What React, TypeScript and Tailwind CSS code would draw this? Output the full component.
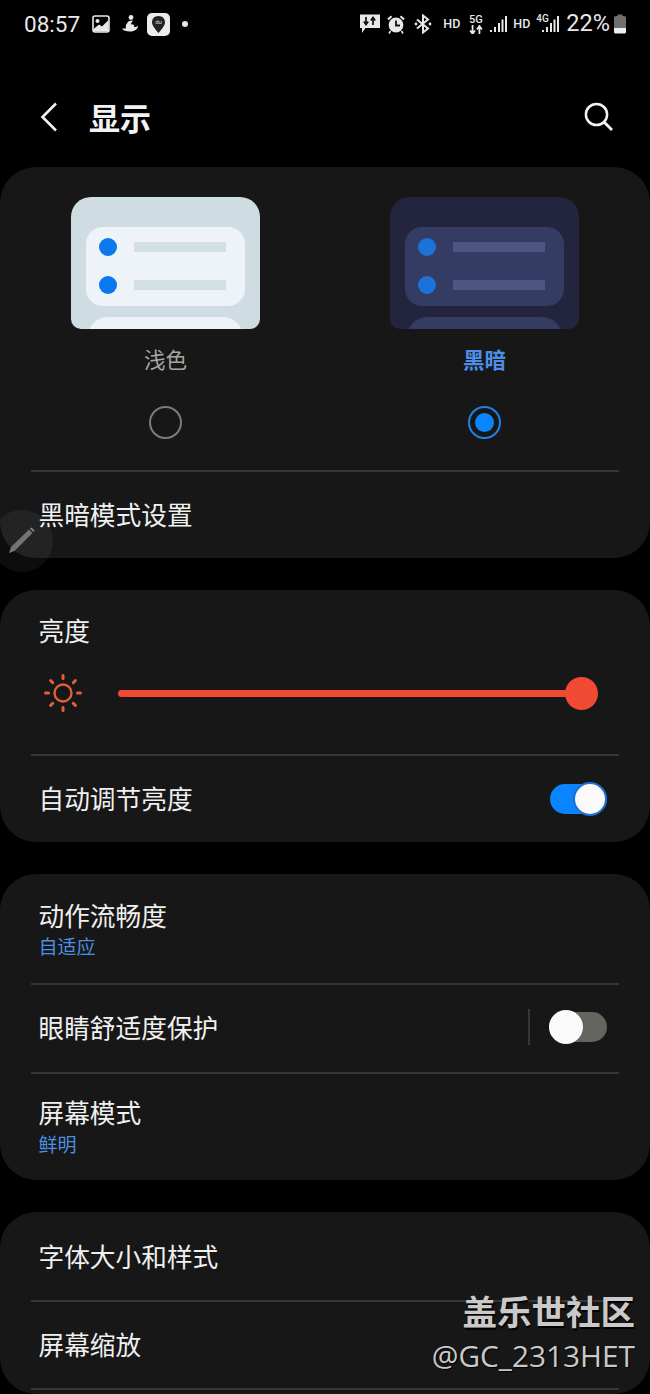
import React from "react";

const cjk = { fontFamily: '"Noto Sans CJK SC", sans-serif' };

function Preview({ dark }: { dark?: boolean }) {
  const bg = dark ? "bg-[#22253d]" : "bg-[#cfdde3]";
  const inner = dark ? "bg-[#343c63]" : "bg-[#eef3f9]";
  const bar = dark ? "bg-[#4c5680]" : "bg-[#d2dfe3]";
  const dot = dark ? "bg-[#1b72d8]" : "bg-[#0b78ee]";
  const Line = () => (
    <div className="flex items-center h-[38px] pl-[13px]">
      <div className={`w-[18px] h-[18px] rounded-full ${dot}`} />
      <div className={`ml-[17px] w-[92px] h-[10px] ${bar}`} />
    </div>
  );
  return (
    <div className={`w-[189px] h-[132px] rounded-t-[20px] rounded-b-[10px] overflow-hidden pt-[30px] px-[15px] ${bg}`}>
      <div className={`h-[79px] rounded-[17px] pt-[1px] ${inner}`}>
        <Line />
        <Line />
      </div>
      <div className={`mt-[11px] mx-[2px] h-[30px] rounded-t-[20px] ${inner}`} />
    </div>
  );
}

function Divider() {
  return <div className="mx-[31px] h-[2px] bg-[#363636]" />;
}

function Row({ title, sub, subMt = "mt-[-1px]", h, pt, children }: { title: string; sub?: string; subMt?: string; h: string; pt: string; children?: React.ReactNode }) {
  return (
    <div className={`flex items-start justify-between pl-[38.5px] pr-[43px] ${h} ${pt}`}>
      <div>
        <div className="text-[25.7px] leading-[36px] text-[#f0f0f0]">{title}</div>
        {sub && <div className={`text-[19px] leading-[27px] text-[#4d8fe0] ${subMt}`}>{sub}</div>}
      </div>
      {children}
    </div>
  );
}

function Sun() {
  const rays = [0, 45, 90, 135, 180, 225, 270, 315];
  return (
    <svg width="40" height="40" viewBox="0 0 40 40" className="shrink-0">
      <circle cx="20" cy="20" r="8.5" fill="none" stroke="#e45f38" strokeWidth="2.4" />
      {rays.map((r) => (
        <line key={r} x1="20" y1="2.5" x2="20" y2="5.5" stroke="#e45f38" strokeWidth="3" strokeLinecap="round" transform={`rotate(${r} 20 20)`} />
      ))}
    </svg>
  );
}

function Card({ children }: { children: React.ReactNode }) {
  return <div className="rounded-[36px] bg-[#171717]">{children}</div>;
}

function Hd() {
  return <span className="text-[12.5px] leading-none font-medium text-[#e8e8e8]" style={{ fontFamily: "Roboto, sans-serif" }}>HD</span>;
}

function Bars({ w = 18 }: { w?: number }) {
  return (
    <svg width={w} height="18" viewBox="0 0 18 18">
      <rect x="1" y="15" width="2" height="2" fill="#e8e8e8" />
      <rect x="5" y="12" width="2" height="5" fill="#e8e8e8" />
      <rect x="9" y="8" width="2" height="9" fill="#e8e8e8" />
      <rect x="12.5" y="4.5" width="2" height="12.5" fill="#e8e8e8" />
      <rect x="16" y="1" width="2" height="16" fill="#e8e8e8" />
    </svg>
  );
}

function Arrows({ size = 14 }: { size?: number }) {
  return (
    <svg width={size} height={size * 0.7} viewBox="0 0 14 10">
      <path d="M3.5 0V8M1 5.5L3.5 9L6 5.5" fill="none" stroke="#e8e8e8" strokeWidth="1.8" />
      <path d="M10.5 10V2M8 4.5L10.5 1L13 4.5" fill="none" stroke="#e8e8e8" strokeWidth="1.8" />
    </svg>
  );
}

function StatusBar() {
  return (
    <div className="h-[48px] flex items-center pl-[24px] pr-[23px] text-[#e8e8e8]">
      <span className="text-[22.5px] leading-none w-[68px]" style={{ fontFamily: "Roboto, sans-serif" }}>08:57</span>
      <svg width="18" height="18" viewBox="0 0 18 18">
        <rect x="1" y="1" width="16" height="16" rx="2" fill="none" stroke="#e8e8e8" strokeWidth="1.6" />
        <circle cx="5.5" cy="6" r="2" fill="#e8e8e8" />
        <path d="M1.5 14L7 9.5L10 11.5L16.5 5V16.5H1.5Z" fill="#e8e8e8" />
      </svg>
      <svg width="18" height="20" viewBox="0 0 18 20" className="ml-[11px]">
        <circle cx="10" cy="3.5" r="2.4" fill="#e8e8e8" />
        <path d="M8 7L12 6.5L9.5 10.5C12 10 14 11 13 13C15 13 16 12.5 17 11.5C17 15 14 17.5 9 17.5C5 17.5 2 16.5 1 14.5L5 14.5C4 12 5.5 9 8 7Z" fill="#e8e8e8" />
      </svg>
      <svg width="23" height="23" viewBox="0 0 23 23" className="ml-[8px]">
        <rect x="0" y="0" width="23" height="23" rx="5" fill="#ececec" />
        <path d="M11.5 3C7.5 3 5 5.8 5 9.2C5 13 9.2 17 11.5 20C13.8 17 18 13 18 9.2C18 5.8 15.5 3 11.5 3Z" fill="#222" />
        <text x="11.5" y="11" textAnchor="middle" fontSize="6" fill="#ddd" fontFamily="Roboto, sans-serif">du</text>
      </svg>
      <div className="ml-[12px] w-[6px] h-[6px] rounded-full bg-[#e8e8e8]" />
      <div className="ml-auto flex items-center">
        <svg width="20" height="20" viewBox="0 0 20 20" className="ml-[1px]">
          <path d="M0 0.5H20V14H5.5L2 19V14H0Z" fill="#e8e8e8" />
          <path d="M6 3V10M3.8 7.6L6 10.5L8.2 7.6M13 11V4M10.8 6.4L13 3.5L15.2 6.4" fill="none" stroke="#111" strokeWidth="1.7" />
        </svg>
        <svg width="18" height="19" viewBox="0 0 18 19" className="ml-[7px]">
          <circle cx="9" cy="10" r="7.4" fill="#e8e8e8" />
          <path d="M9 5.5V10.5H13" fill="none" stroke="#111" strokeWidth="1.8" />
          <path d="M1 4.5L4.5 1.2M17 4.5L13.5 1.2" stroke="#e8e8e8" strokeWidth="2" />
          <path d="M3.5 16L2 18.5M14.5 16L16 18.5" stroke="#e8e8e8" strokeWidth="1.6" />
        </svg>
        <svg width="18" height="20" viewBox="0 0 18 20" className="ml-[9px]">
          <path d="M3 5.5L14 14.5L9 18.5V1.5L14 5.5L3 14.5" fill="none" stroke="#e8e8e8" strokeWidth="2" />
          <circle cx="2" cy="10" r="1.4" fill="#e8e8e8" />
          <circle cx="16" cy="10" r="1.4" fill="#e8e8e8" />
        </svg>
        <span className="ml-[11px] w-[16px] flex"><Hd /></span>
        <div className="ml-[9px] w-[15px] flex flex-col items-center">
          <span className="text-[11px] leading-[11px] font-medium text-[#e8e8e8]" style={{ fontFamily: "Roboto, sans-serif" }}>5G</span>
          <Arrows />
        </div>
        <span className="ml-[6px]"><Bars /></span>
        <span className="ml-[6px] w-[16px] flex"><Hd /></span>
        <div className="ml-[7px] relative w-[23px] h-[20px]">
          <span className="absolute left-0 top-0 text-[10px] leading-[10px] font-medium text-[#e8e8e8]" style={{ fontFamily: "Roboto, sans-serif" }}>4G</span>
          <span className="absolute right-0 top-[1px]"><Bars /></span>
        </div>
        <span className="ml-[7px] text-[23.5px] leading-none" style={{ fontFamily: "Roboto, sans-serif" }}>22%</span>
        <svg width="14" height="20" viewBox="0 0 14 20" className="ml-[3px]">
          <path d="M4.5 0.5H9.5V2H4.5Z" fill="#6f6f6f" />
          <path d="M1 4C1 2.8 1.8 2 3 2H11C12.2 2 13 2.8 13 4V14H1Z" fill="#6f6f6f" />
          <path d="M1 14H13V18C13 19 12.2 19.5 11 19.5H3C1.8 19.5 1 19 1 18Z" fill="#eeeeee" />
        </svg>
      </div>
    </div>
  );
}

export default function App() {
  return (
    <div className="relative w-[650px] h-[1394px] overflow-hidden bg-black" style={cjk}>
      <StatusBar />
      <div className="h-[119px] pt-[19px] flex items-center pl-[39px] pr-[36px]">
        <svg width="20" height="30" viewBox="0 0 20 30">
          <path d="M17 1.5L3.5 15L17 28.5" fill="none" stroke="#f2f2f2" strokeWidth="2.6" />
        </svg>
        <span className="ml-[30px] text-[31px] leading-none font-bold text-[#f2f2f2] mt-[-2px]">显示</span>
        <svg width="30" height="30" viewBox="0 0 30 30" className="ml-auto">
          <circle cx="12.5" cy="12.5" r="10.6" fill="none" stroke="#f2f2f2" strokeWidth="2.5" />
          <path d="M20 20L28 28" stroke="#f2f2f2" strokeWidth="2.8" />
        </svg>
      </div>

      <div className="flex flex-col gap-[32px]">
        <Card>
          <div className="pt-[30px] h-[303px]">
            <div className="flex gap-[130px] pl-[71px]">
              <div className="w-[189px] flex flex-col items-center">
                <Preview />
                <div className="mt-[13px] text-[21.5px] leading-[34px] text-[#a6a6a6]">浅色</div>
                <div className="mt-[30px] w-[33px] h-[33px] rounded-full border-2 border-[#7c7c7c]" />
              </div>
              <div className="w-[189px] flex flex-col items-center">
                <Preview dark />
                <div className="mt-[13px] text-[21.5px] leading-[34px] font-bold text-[#4d8fe8]">黑暗</div>
                <div className="mt-[30px] w-[33px] h-[33px] rounded-full border-2 border-[#1c82ea] flex items-center justify-center">
                  <div className="w-[19px] h-[19px] rounded-full bg-[#0a84ff]" />
                </div>
              </div>
            </div>
          </div>
          <Divider />
          <Row title="黑暗模式设置" h="h-[86px]" pt="pt-[24px]" />
        </Card>

        <Card>
          <div className="h-[164px] pt-[22px]">
            <div className="pl-[38.5px] text-[25.7px] leading-[36px] text-[#f0f0f0]">亮度</div>
            <div className="mt-[25px] flex items-center pl-[43px] pr-[60px]">
              <Sun />
              <div className="ml-[35px] flex-1 h-[7px] rounded-full bg-[#f04a33] relative">
                <div className="absolute right-[-8px] top-[-13px] w-[33px] h-[33px] rounded-full bg-[#f04a33]" />
              </div>
            </div>
          </div>
          <Divider />
          <Row title="自动调节亮度" h="h-[86px]" pt="pt-[24px]">
            <div className="relative mt-[4px] w-[57px] h-[30px] rounded-full bg-[#0a84ff]">
              <div className="absolute right-0 top-[-2px] w-[34px] h-[34px] rounded-full bg-[#fafafa] border-2 border-[#1d6fd0]" />
            </div>
          </Row>
        </Card>

        <Card>
          <Row title="动作流畅度" sub="自适应" subMt="mt-[-1px]" h="h-[109px]" pt="pt-[23px]" />
          <Divider />
          <Row title="眼睛舒适度保护" h="h-[87px]" pt="pt-[24px]">
            <div className="flex items-center">
              <div className="w-[2px] h-[36px] bg-[#363636]" />
              <div className="relative ml-[19px] w-[58px] h-[30px] rounded-full bg-[#65655f]">
                <div className="absolute left-0 top-[-2px] w-[34px] h-[34px] rounded-full bg-[#fafafa]" />
              </div>
            </div>
          </Row>
          <Divider />
          <Row title="屏幕模式" sub="鲜明" subMt="mt-[0px]" h="h-[106px]" pt="pt-[20px]" />
        </Card>

        <Card>
          <Row title="字体大小和样式" h="h-[88px]" pt="pt-[26px]" />
          <Divider />
          <Row title="屏幕缩放" h="h-[86px]" pt="pt-[24px]" />
          <Divider />
          <div className="h-[4px]" />
        </Card>
      </div>

      <div className="absolute left-[-9px] top-[510px] w-[62px] h-[62px] rounded-full bg-white/5 flex items-center justify-center">
        <svg width="30" height="30" viewBox="0 0 30 30" className="ml-[-2px]">
          <path d="M3 27L5 21L23 3.5L26.5 7L8.5 25Z" fill="#747474" />
          <path d="M24 2.5L25.5 1.5L28.5 4.5L27.5 6Z" fill="#8a8a8a" />
        </svg>
      </div>

      <div className="absolute right-[15px] top-[1289px] flex flex-col items-end text-[#c9c9c9]">
        <div className="text-[34.5px] leading-[42px] font-bold [text-shadow:1px_2px_1px_#000]">盖乐世社区</div>
        <div className="mt-[4px] text-[29.8px] leading-[42px] [text-shadow:1px_1px_1px_#000]" style={{ fontFamily: '"Open Sans", sans-serif' }}>@GC_2313HET</div>
      </div>
    </div>
  );
}
